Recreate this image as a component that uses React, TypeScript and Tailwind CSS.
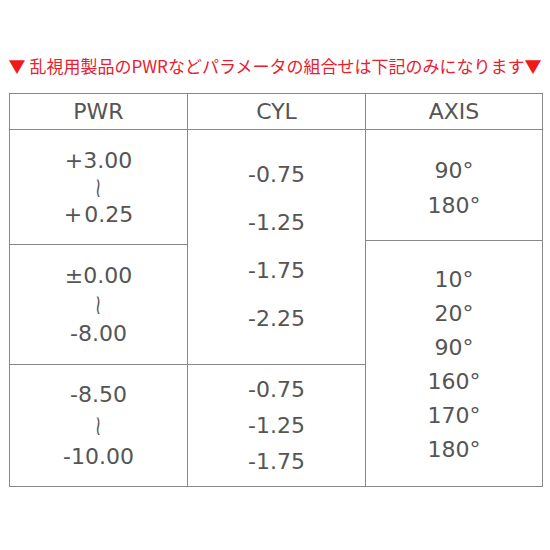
const num = "font-['DejaVu_Sans',Verdana,sans-serif] text-[22px] text-[#555]";

function Wave() {
  return <div className="text-[28px] scale-x-[0.6]">≀</div>;
}

export default function App() {
  return (
    <div className="w-[550px] h-[550px] bg-white pt-[53px]">
      <div className="h-[26px] leading-[26px] text-center text-[17px] text-[#e8202e] font-['Noto_Sans_CJK_JP','Noto_Sans',sans-serif] whitespace-nowrap">
        <span className="text-[#f01a1a]">▼</span>&nbsp;乱視用製品のPWRなどパラメータの組合せは下記のみになります<span className="text-[#f01a1a]">▼</span>
      </div>

      <div className={`mt-[14px] ml-[9px] w-[534px] border border-[#888] grid grid-cols-[178px_178px_176px] text-center ${num}`}>
        {/* PWR */}
        <div className="flex flex-col border-r border-[#888]">
          <div className="h-[36px] border-b border-[#888] flex items-center justify-center">PWR</div>
          <div className="h-[115px] border-b border-[#888] flex flex-col items-center justify-center leading-[27px]">
            <div>+3.00</div>
            <Wave />
            <div>+&#8202;0.25</div>
          </div>
          <div className="h-[120px] border-b border-[#888] flex flex-col items-center justify-center leading-[29px]">
            <div>±0.00</div>
            <Wave />
            <div>-8.00</div>
          </div>
          <div className="h-[121px] flex flex-col items-center justify-center leading-[31px]">
            <div>-8.50</div>
            <Wave />
            <div>-10.00</div>
          </div>
        </div>

        {/* CYL */}
        <div className="flex flex-col border-r border-[#888]">
          <div className="h-[36px] border-b border-[#888] flex items-center justify-center">CYL</div>
          <div className="h-[235px] border-b border-[#888] flex flex-col items-center justify-center leading-[48px]">
            <div>-0.75</div>
            <div>-1.25</div>
            <div>-1.75</div>
            <div>-2.25</div>
          </div>
          <div className="h-[121px] flex flex-col items-center justify-center leading-[36px]">
            <div>-0.75</div>
            <div>-1.25</div>
            <div>-1.75</div>
          </div>
        </div>

        {/* AXIS */}
        <div className="flex flex-col">
          <div className="h-[36px] border-b border-[#888] flex items-center justify-center">AXIS</div>
          <div className="h-[111px] border-b border-[#888] flex flex-col items-center justify-center leading-[35px] pt-[5px]">
            <div>90°</div>
            <div>180°</div>
          </div>
          <div className="h-[245px] flex flex-col items-center justify-center leading-[34px] pt-[2px]">
            <div>10°</div>
            <div>20°</div>
            <div>90°</div>
            <div>160°</div>
            <div>170°</div>
            <div>180°</div>
          </div>
        </div>
      </div>
    </div>
  );
}
